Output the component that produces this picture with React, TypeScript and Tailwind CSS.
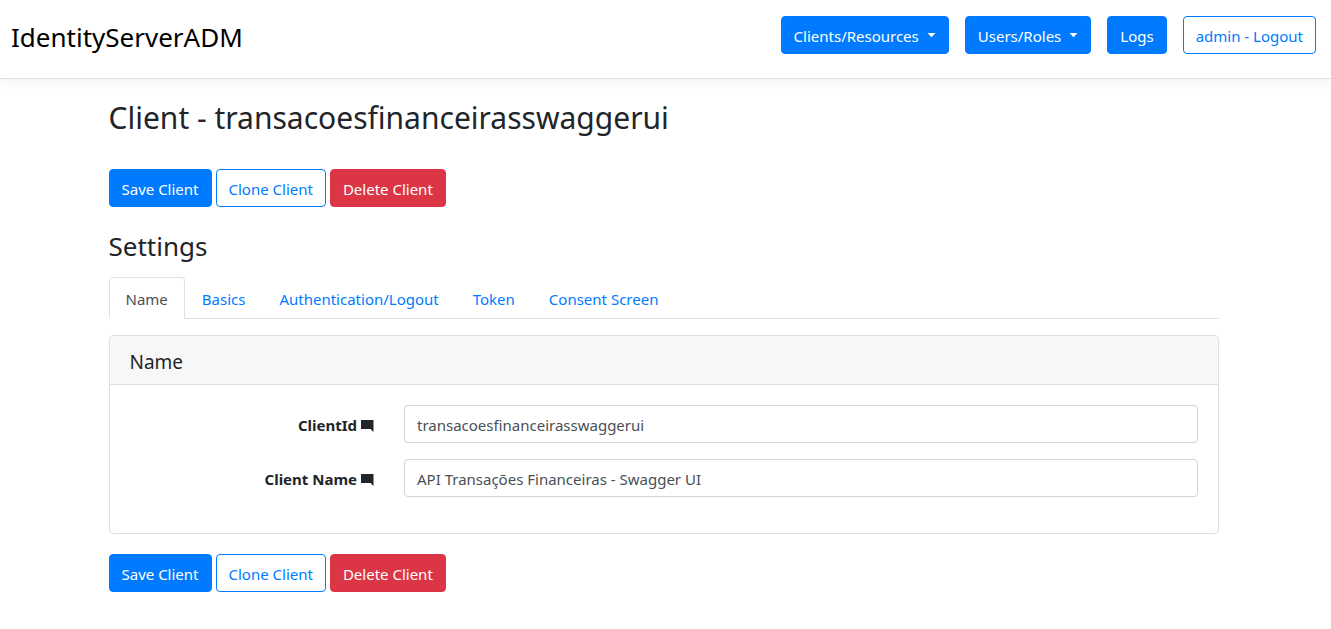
import { useState } from "react";
import type { ReactNode } from "react";

type Variant = "primary" | "outline" | "danger";

const variants: Record<Variant, string> = {
  primary: "border-[#007bff] bg-[#007bff] text-white hover:bg-[#0069d9]",
  outline: "border-[#007bff] bg-white text-[#007bff] hover:bg-[#007bff] hover:text-white",
  danger: "border-[#dc3545] bg-[#dc3545] text-white hover:bg-[#c82333]",
};

function Button({ variant = "primary", caret = false, children }: { variant?: Variant; caret?: boolean; children: ReactNode }) {
  return (
    <button
      type="button"
      aria-haspopup={caret ? "menu" : undefined}
      className={`flex h-[38px] cursor-pointer items-center rounded border px-3 pt-0.5 whitespace-nowrap ${variants[variant]}`}
    >
      {children}
      {caret && (
        <svg className="mb-0.5 ml-2 h-[5px] w-[9px]" viewBox="0 0 9 5" fill="currentColor" aria-hidden="true">
          <path d="M0.500 0h8L4.500 4.300z" />
        </svg>
      )}
    </button>
  );
}

function Actions() {
  return (
    <div className="flex flex-wrap gap-1">
      <Button>Save Client</Button>
      <Button variant="outline">Clone Client</Button>
      <Button variant="danger">Delete Client</Button>
    </div>
  );
}

function CommentIcon() {
  return (
    <svg className="mt-px h-3 w-[13px]" viewBox="0 0 13 12" fill="currentColor" aria-hidden="true">
      <path d="M0 0h12.500v12L9.500 9H0z" />
    </svg>
  );
}

function Field({ id, label, initial }: { id: string; label: string; initial: string }) {
  const [value, setValue] = useState(initial);
  return (
    <div className="grid grid-cols-4 items-center gap-[30px]">
      <label htmlFor={id} className="flex items-center justify-end gap-1 pt-0.5 font-bold">
        {label}
        <CommentIcon />
      </label>
      <input
        id={id}
        type="text"
        value={value}
        onChange={(e) => setValue(e.target.value)}
        className="col-span-3 h-[38px] w-full rounded border border-[#ced4da] bg-white px-3 pt-0.5 text-[#495057] outline-none focus:border-[#80bdff]"
      />
    </div>
  );
}

const tabs = ["Name", "Basics", "Authentication/Logout", "Token", "Consent Screen"];

export default function App() {
  const [active, setActive] = useState("Name");
  return (
    <div className="min-h-screen bg-white font-['Noto_Sans','Open_Sans',sans-serif] text-[15px] leading-6 text-[#212529]">
      <header className="flex items-start justify-between border-b border-[#dee2e6] pt-4 pr-[15px] pb-5 pl-[11px] shadow-[0_4px_12px_rgba(0,0,0,0.05)]">
        <a href="#" className="text-[26px] leading-[42px] text-black">IdentityServerADM</a>
        <nav className="flex gap-4">
          <Button caret>Clients/Resources</Button>
          <Button caret>Users/Roles</Button>
          <Button>Logs</Button>
          <Button variant="outline">admin - Logout</Button>
        </nav>
      </header>

      <main className="pr-1">
        <div className="mx-auto max-w-[1110px] pt-5">
          <h2 className="mb-8 text-[30px] leading-[38px]">Client - transacoesfinanceirasswaggerui</h2>
          <Actions />
          <h3 className="mt-[22px] mb-3.5 text-[26px] leading-[34px]">Settings</h3>

          <div role="tablist" className="flex border-b border-[#dee2e6]">
            {tabs.map((tab) => (
              <button
                key={tab}
                type="button"
                role="tab"
                aria-selected={tab === active}
                onClick={() => setActive(tab)}
                className={`-mb-px h-[42px] cursor-pointer rounded-t border px-4 pt-0.5 whitespace-nowrap ${
                  tab === active ? "border-[#dee2e6] border-b-white bg-white text-[#495057]" : "border-transparent text-[#007bff]"
                }`}
              >
                {tab}
              </button>
            ))}
          </div>

          <section className="mt-4 mb-5 rounded border border-[#dfdfdf]">
            <h4 className="rounded-t border-b border-[#dfdfdf] bg-[#f7f7f7] px-5 pt-3.5 pb-2.5 text-[19px] leading-6">Name</h4>
            <div className="flex flex-col gap-4 px-5 pt-5 pb-9">
              <Field id="client-id" label="ClientId" initial="transacoesfinanceirasswaggerui" />
              <Field id="client-name" label="Client Name" initial="API Transações Financeiras - Swagger UI" />
            </div>
          </section>

          <Actions />
        </div>
      </main>
    </div>
  );
}
